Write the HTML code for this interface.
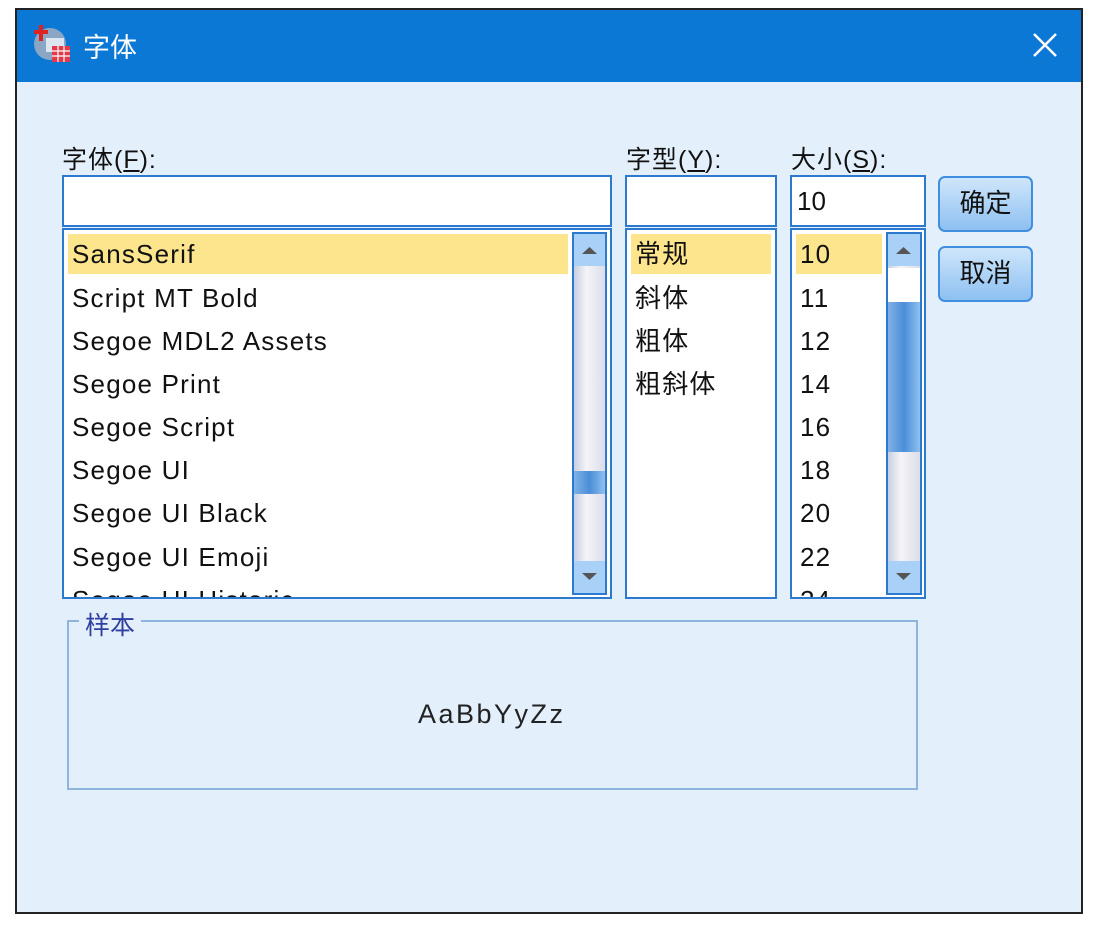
<!DOCTYPE html>
<html><head><meta charset="utf-8"><style>
*{margin:0;padding:0;box-sizing:border-box}
body{width:1100px;height:929px;background:#fff;position:relative;overflow:hidden;font-family:"Liberation Sans","Noto Sans CJK SC",sans-serif;color:#111}
.a{position:absolute}
.win{left:15px;top:8px;width:1068px;height:906px;border:2px solid #222;background:#e3effa}
.title{left:17px;top:10px;width:1064px;height:72px;background:#0a78d4}
.lbl{font-size:25px;color:#111;letter-spacing:1px}
.box{background:#fff;border:2px solid #2c7ad0}
.item{position:absolute;left:8px;font-size:26px;line-height:40px;white-space:nowrap;letter-spacing:1.2px}
.sel{background:#fde58d}
.sb{border:2px solid #2c7ad0;background:linear-gradient(90deg,#c9cfe0,#f4f4f8 40%,#dcdde8)}
.arr{position:absolute;left:0;width:100%;height:32px;background:#a9d0f7}
.thumb{position:absolute;left:0;width:100%;background:linear-gradient(90deg,#7fb1e6,#4b8ed8 50%,#8ec0ef)}
.btn{border:2px solid #3f8ee0;border-radius:7px;background:linear-gradient(#cfe6fb,#8dc0f1);font-size:26px;text-align:center;line-height:50px}
</style></head><body>
<div class="a win"></div>
<div class="a title"></div>
<svg class="a" style="left:32px;top:24px" width="42" height="42" viewBox="0 0 42 42">
<circle cx="18" cy="20" r="16" fill="#8aa6c4"/><rect x="14" y="14" width="18" height="14" fill="#dde6f0"/>
<rect x="2" y="6" width="14" height="4" fill="#d22"/><rect x="7" y="1" width="4" height="16" fill="#d22"/>
<rect x="20" y="22" width="18" height="16" fill="#e23a4a"/><path d="M20 27h18M20 32h18M26 22v16M32 22v16" stroke="#fff" stroke-width="1.2"/></svg>
<div class="a" style="left:83px;top:26px;font-size:27px;color:#fff">字体</div>
<svg class="a" style="left:1032px;top:32px" width="26" height="26"><path d="M2 2L24 24M24 2L2 24" stroke="#fff" stroke-width="2.5"/></svg>

<div class="a lbl" style="left:62px;top:140px">字体(<u>F</u>):</div>
<div class="a lbl" style="left:626px;top:140px">字型(<u>Y</u>):</div>
<div class="a lbl" style="left:791px;top:140px">大小(<u>S</u>):</div>

<div class="a box" style="left:62px;top:175px;width:550px;height:52px"></div>
<div class="a box" style="left:625px;top:175px;width:152px;height:52px"></div>
<div class="a box" style="left:790px;top:175px;width:136px;height:52px"><span style="position:absolute;left:5px;top:9px;font-size:26px">10</span></div>

<div class="a box" style="left:62px;top:228px;width:550px;height:371px;overflow:hidden">
<div class="item sel" style="left:4px;top:4px;width:500px;padding-left:4px">SansSerif</div>
<div class="item" style="top:48px">Script MT Bold</div>
<div class="item" style="top:91px">Segoe MDL2 Assets</div>
<div class="item" style="top:134px">Segoe Print</div>
<div class="item" style="top:177px">Segoe Script</div>
<div class="item" style="top:220px">Segoe UI</div>
<div class="item" style="top:263px">Segoe UI Black</div>
<div class="item" style="top:307px">Segoe UI Emoji</div>
<div class="item" style="top:350px">Segoe UI Historic</div>
</div>
<div class="a sb" style="left:572px;top:232px;width:35px;height:363px">
<div class="arr" style="top:0">
<svg width="31" height="32"><path d="M8 20h15l-7.5-7z" fill="#555"/></svg></div>
<div class="thumb" style="top:237px;height:23px"></div>
<div class="arr" style="bottom:0"><svg width="31" height="32"><path d="M8 12h15l-7.5 7z" fill="#555"/></svg></div>
</div>

<div class="a box" style="left:625px;top:228px;width:152px;height:371px;overflow:hidden">
<div class="item sel" style="left:4px;top:4px;width:140px;padding-left:4px">常规</div>
<div class="item" style="top:48px">斜体</div>
<div class="item" style="top:91px">粗体</div>
<div class="item" style="top:134px">粗斜体</div>
</div>

<div class="a box" style="left:790px;top:228px;width:136px;height:371px;overflow:hidden">
<div class="item sel" style="left:4px;top:4px;width:86px;padding-left:4px">10</div>
<div class="item" style="top:48px">11</div>
<div class="item" style="top:91px">12</div>
<div class="item" style="top:134px">14</div>
<div class="item" style="top:177px">16</div>
<div class="item" style="top:220px">18</div>
<div class="item" style="top:263px">20</div>
<div class="item" style="top:307px">22</div>
<div class="item" style="top:350px">24</div>
</div>
<div class="a sb" style="left:886px;top:232px;width:36px;height:363px">
<div class="arr" style="top:0"><svg width="32" height="32"><path d="M8 20h15l-7.5-7z" fill="#555"/></svg></div>
<div class="a" style="left:0;top:34px;width:100%;height:34px;background:#fff"></div>
<div class="thumb" style="top:68px;height:150px"></div>
<div class="arr" style="bottom:0"><svg width="32" height="32"><path d="M8 12h15l-7.5 7z" fill="#555"/></svg></div>
</div>

<div class="a btn" style="left:938px;top:176px;width:95px;height:56px">确定</div>
<div class="a btn" style="left:938px;top:246px;width:95px;height:56px">取消</div>

<div class="a" style="left:67px;top:620px;width:851px;height:170px;border:2px solid #8fb5dd"></div>
<div class="a" style="left:79px;top:606px;padding:0 6px;background:#e3effa;color:#3040a0;font-size:25px">样本</div>
<div class="a" style="left:418px;top:699px;font-size:27px;color:#222;letter-spacing:2.5px">AaBbYyZz</div>
</body></html>
